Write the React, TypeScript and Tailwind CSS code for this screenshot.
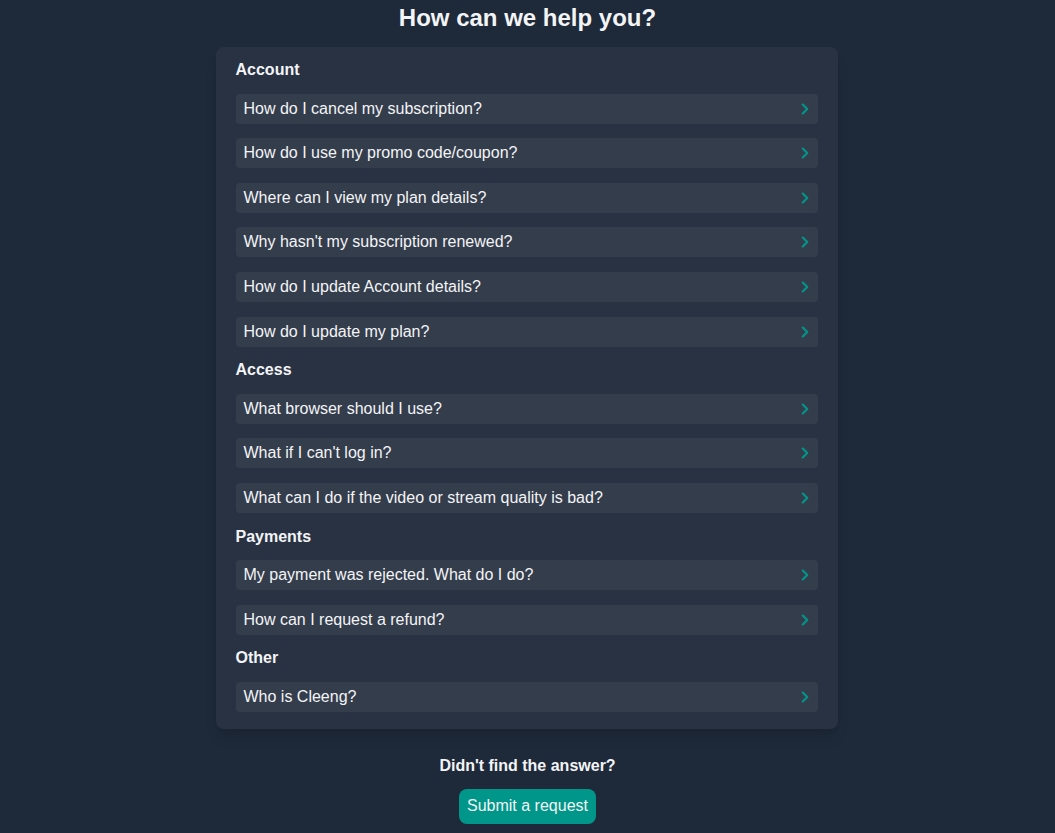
import { ChevronRight } from 'lucide-react';

const sections = [
  {
    title: 'Account',
    questions: [
      'How do I cancel my subscription?',
      'How do I use my promo code/coupon?',
      'Where can I view my plan details?',
      "Why hasn't my subscription renewed?",
      'How do I update Account details?',
      'How do I update my plan?',
    ],
  },
  {
    title: 'Access',
    questions: [
      'What browser should I use?',
      "What if I can't log in?",
      'What can I do if the video or stream quality is bad?',
    ],
  },
  {
    title: 'Payments',
    questions: ['My payment was rejected. What do I do?', 'How can I request a refund?'],
  },
  {
    title: 'Other',
    questions: ['Who is Cleeng?'],
  },
];

export default function App() {
  return (
    <div
      className="min-h-screen bg-[#1e2939] text-gray-100 flex flex-col items-center"
      style={{ fontFamily: '"Liberation Sans", Arial, sans-serif' }}
    >
      <h1 className="text-[24px] font-bold leading-[36px] text-[#f3f4f6]">How can we help you?</h1>

      {/* FAQ card */}
      <div className="mt-[11px] -translate-x-px w-[622px] bg-[#283242] rounded-lg shadow-lg pt-[14px] pb-[17px] px-5 flex flex-col gap-[14.6px]">
        {sections.map((section) => (
          <div key={section.title} className="contents">
            <h2 className="text-base font-bold leading-[18px] h-[18px]">{section.title}</h2>
            {section.questions.map((q) => (
              <div
                key={q}
                className="h-[30px] bg-[#343d4c] rounded flex items-center justify-between pl-2 pr-[3px] text-base"
              >
                <span>{q}</span>
                <ChevronRight size={18} strokeWidth={2.8} className="text-teal-600 mr-[1px]" />
              </div>
            ))}
          </div>
        ))}
      </div>

      {/* Contact */}
      <p className="mt-[28px] text-base font-bold leading-[18px]">Didn't find the answer?</p>
      <button className="mt-[14px] h-[35px] px-2 rounded-lg bg-teal-600 text-base text-gray-100">
        Submit a request
      </button>
    </div>
  );
}
